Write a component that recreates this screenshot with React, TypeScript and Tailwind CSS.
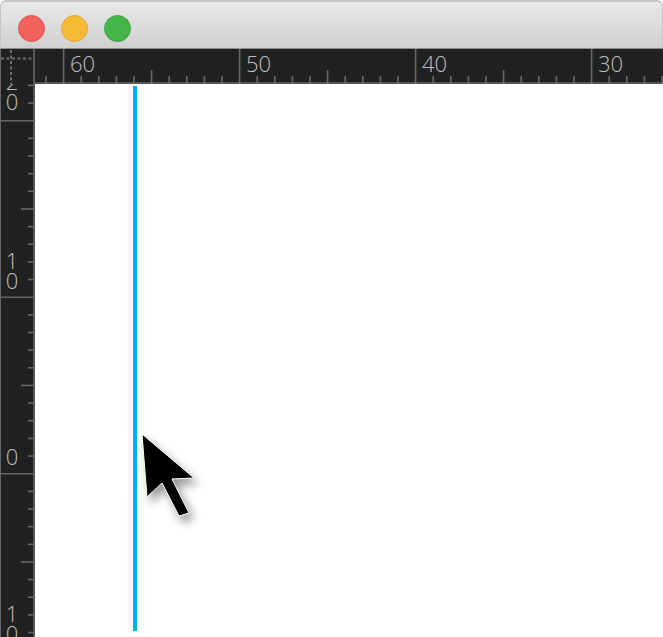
const C = "#202221";
const T = "#666766";
const font = { fontFamily: '"Open Sans", "DejaVu Sans", sans-serif' };

function TopRuler() {
  const ticks: React.ReactNode[] = [];
  for (let i = -1; i < 40; i++) {
    const x = 29.6 + i * 17.6;
    const m = ((i % 10) + 10) % 10;
    const major = m === 0;
    const mid = m === 5;
    const y1 = major ? 0 : mid ? 21 : 27;
    ticks.push(<line key={i} x1={x} x2={x} y1={y1} y2={35} stroke={T} strokeWidth={1.6} />);
  }
  return (
    <svg width="629" height="35" className="absolute inset-0">
      {ticks}
      <line x1="0" x2="629" y1="34" y2="34" stroke={T} strokeWidth="1.5" />
    </svg>
  );
}

function LeftRuler() {
  const ticks: React.ReactNode[] = [];
  for (let i = -2; i < 32; i++) {
    const y = 36.7 + i * 17.65;
    const m = ((i % 10) + 10) % 10;
    const major = m === 0;
    const mid = m === 5;
    const x1 = major ? 0 : mid ? 21 : 28;
    ticks.push(<line key={i} x1={x1} x2={34} y1={y} y2={y} stroke={T} strokeWidth={1.6} />);
  }
  return (
    <svg width="35" height="553" className="absolute inset-0">
      {ticks}
      <line x1="0.5" x2="0.5" y1="0" y2="553" stroke={T} />
      <line x1="34" x2="34" y1="0" y2="553" stroke={T} strokeWidth="1.5" />
    </svg>
  );
}

function Stack({ a, b, top }: { a?: string; b: string; top: number }) {
  return (
    <div className="absolute left-0 w-[24px] flex flex-col items-center text-[22px] font-light leading-[20px] text-[#bdbdbd]" style={{ top }}>
      {a ? <span>{a}</span> : null}
      <span>{b}</span>
    </div>
  );
}

function Light({ cls }: { cls: string }) {
  return <div className={`w-[27px] h-[27px] rounded-full border ${cls}`} />;
}

function TopLabel({ cls, text }: { cls: string; text: string }) {
  return <span className={`absolute top-[2px] text-[22px] font-light leading-[24px] text-[#bdbdbd] ${cls}`}>{text}</span>;
}

export default function App() {
  return (
    <div className="relative w-[663px] h-[637px] overflow-hidden bg-white flex flex-col" style={font}>
      <div className="h-[48px] shrink-0 flex items-center gap-[16px] pl-[17px] pt-[6px] rounded-t-[6px] border-t-2 border-x border-[#c4c4c4] border-b-0 bg-gradient-to-b from-[#e8e8e7] to-[#cfd0cf]">
        <Light cls="bg-[#f2625c] border-[#e0524d]" />
        <Light cls="bg-[#f6ba35] border-[#e3a52c]" />
        <Light cls="bg-[#46b549] border-[#3aa53f]" />
      </div>
      <div className="h-[36px] shrink-0 flex border-t border-[#8c8c8c]" style={{ backgroundColor: C }}>
        <div className="relative w-[34px] h-[35px] shrink-0">
          <svg width="35" height="35" className="absolute inset-0 z-10">
            <line x1="1" x2="33" y1="9.5" y2="9.5" stroke="#6e6e6e" strokeWidth="2" strokeDasharray="3 2.5" />
            <line x1="11" x2="11" y1="1" y2="35" stroke="#6e6e6e" strokeWidth="2" strokeDasharray="3 2.5" />
            <line x1="0.5" x2="0.5" y1="0" y2="35" stroke="#666766" />
            <line x1="34" x2="34" y1="0" y2="35" stroke="#666766" strokeWidth="1.6" />
          </svg>
        </div>
        <div className="relative flex-1 h-[35px]">
          <TopRuler />
          <TopLabel cls="left-[36px]" text="60" />
          <TopLabel cls="left-[212px]" text="50" />
          <TopLabel cls="left-[388px]" text="40" />
          <TopLabel cls="left-[564px]" text="30" />
        </div>
      </div>
      <div className="flex-1 flex min-h-0">
        <div className="relative w-[35px] shrink-0 overflow-hidden" style={{ backgroundColor: C }}>
          <LeftRuler />
          <Stack a="2" b="0" top={-13} />
          <Stack a="1" b="0" top={166} />
          <Stack b="0" top={362} />
          <Stack a="1" b="0" top={519} />
        </div>
        <div className="relative flex-1 bg-white pt-[2px] pl-[98px]">
          <div className="w-[4px] h-[545px] bg-[#00aeef]" />
          <svg width="70" height="100" viewBox="0 0 70 100" className="absolute left-[100px] top-[343px] drop-shadow-[4px_6px_5px_rgba(0,0,0,0.4)]">
            <polygon points="7,7 59,51 37,52 54,86 44,89 27,56 12,70" fill="#000" stroke="#fff" strokeWidth="1" />
          </svg>
        </div>
      </div>
    </div>
  );
}
